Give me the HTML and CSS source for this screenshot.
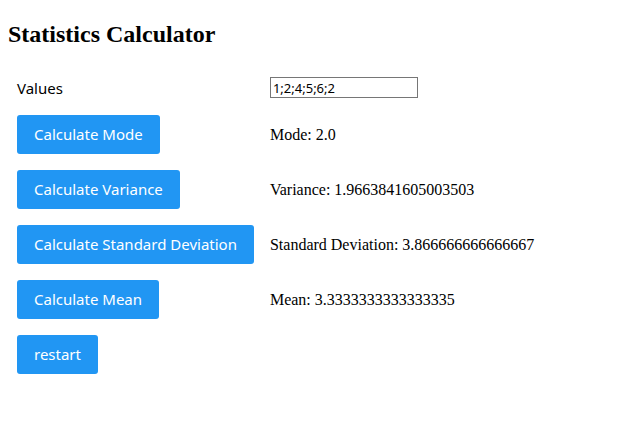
FILE: index.html
```html
<!DOCTYPE html>
<html>
<head>
<meta charset="utf-8">
<link rel="stylesheet" href="styles.css">
</head>
<body>
<h2 class="title">Statistics Calculator</h2>
<table class="calc">
  <tr class="input-row">
    <td class="label">Values</td>
    <td><input class="values" type="text" value="1;2;4;5;6;2"></td>
  </tr>
  <tr>
    <td><button class="btn">Calculate Mode</button></td>
    <td class="result">Mode: 2.0</td>
  </tr>
  <tr>
    <td><button class="btn">Calculate Variance</button></td>
    <td class="result">Variance: 1.9663841605003503</td>
  </tr>
  <tr>
    <td><button class="btn">Calculate Standard Deviation</button></td>
    <td class="result">Standard Deviation: 3.866666666666667</td>
  </tr>
  <tr>
    <td><button class="btn">Calculate Mean</button></td>
    <td class="result">Mean: 3.3333333333333335</td>
  </tr>
  <tr>
    <td><button class="btn">restart</button></td>
    <td></td>
  </tr>
</table>
</body>
</html>
```

FILE: styles.css
```css
body {
  margin: 8px;
  font-family: "Liberation Serif", serif;
  font-size: 16px;
  color: #000;
  background: #fff;
}
.title {
  font-size: 24px;
  font-weight: bold;
  margin: 13px 0 20px;
}
.calc {
  border-spacing: 2px;
}
.calc td {
  padding: 7px;
  text-align: left;
  vertical-align: middle;
}
.calc .input-row td {
  padding-bottom: 8px;
}
.label {
  font-family: "Noto Sans", sans-serif;
  font-size: 15px;
}
.values {
  font-family: "Noto Sans", sans-serif;
  font-size: 13px;
  width: 148px;
  height: 21px;
  box-sizing: border-box;
  border: 1px solid #767676;
  padding: 0 2px;
  margin: 0;
  display: block;
}
.btn {
  font-family: "Noto Sans", sans-serif;
  font-size: 15px;
  line-height: 23px;
  color: #fff;
  background: #2196f3;
  border: none;
  border-radius: 3px;
  padding: 8px 17px;
  height: 39px;
  margin: 0;
  display: block;
}
.result {
  font-size: 16px;
}
```
